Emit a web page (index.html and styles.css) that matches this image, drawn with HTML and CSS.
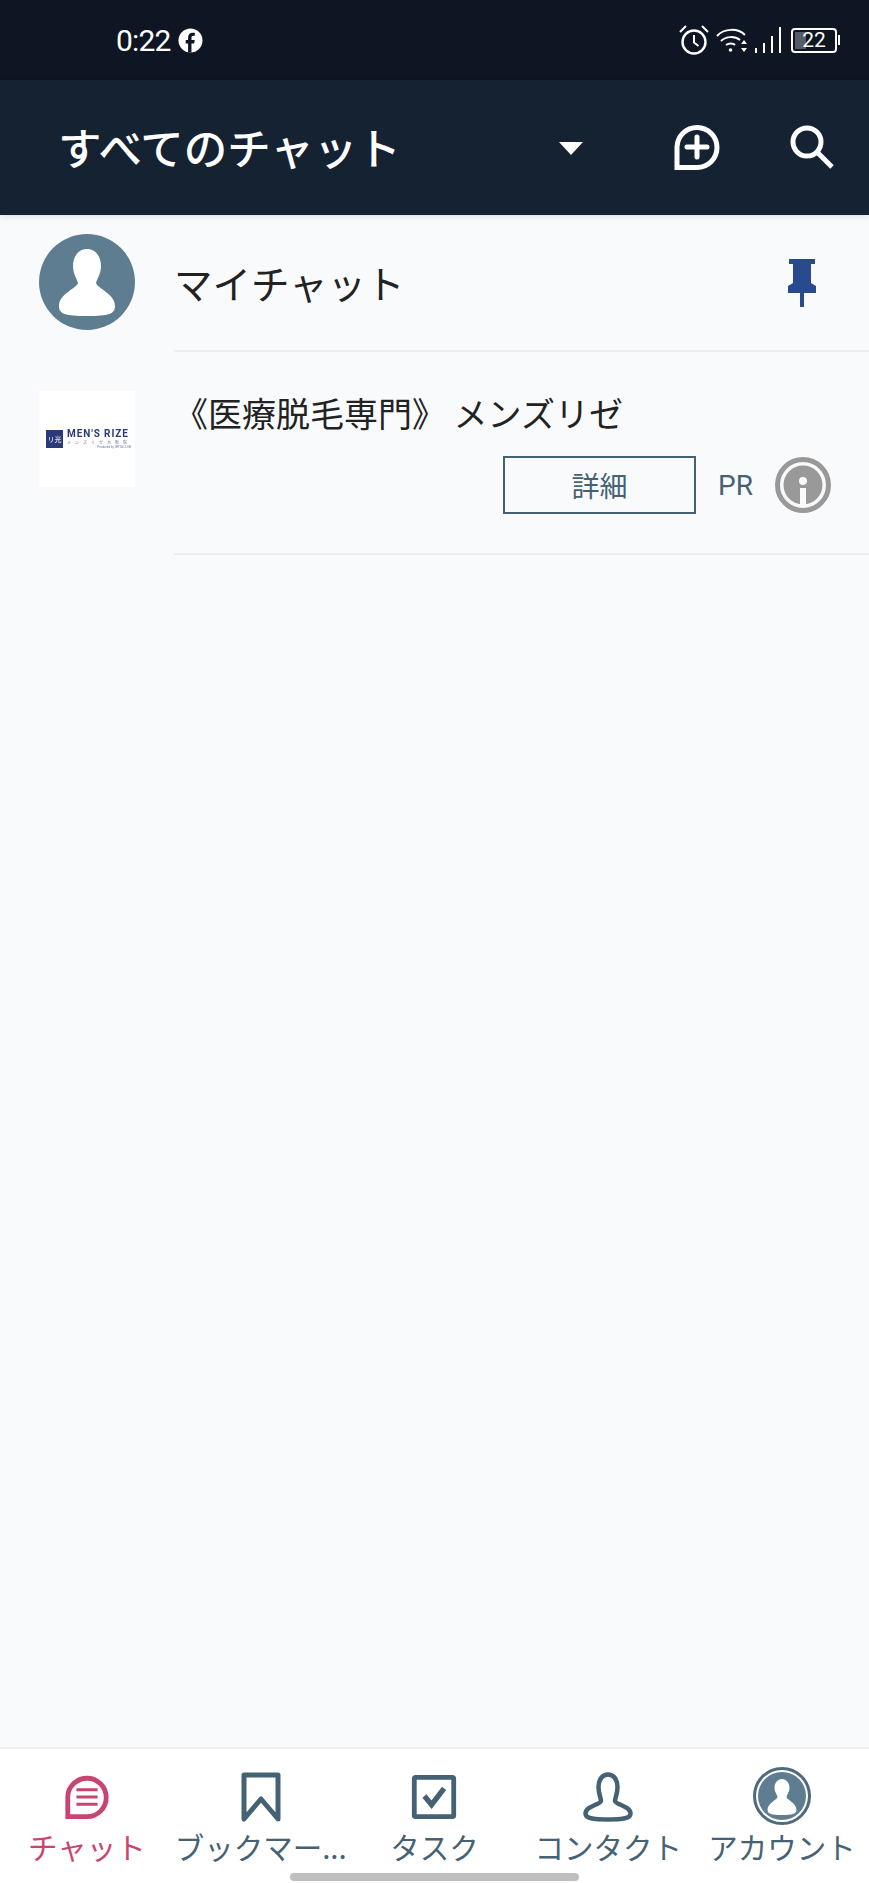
FILE: index.html
```html
<!DOCTYPE html>
<html lang="ja">
<head>
    <meta charset="utf-8" />
    <title>すべてのチャット</title>
    <meta name="viewport" content="width=device-width, initial-scale=1">
    <link rel="stylesheet" href="styles.css">
</head>
<body>
    <div class="status-bar">
        <div class="status-left">
            <span class="time">0:22</span>
            <svg class="fb-icon" viewBox="0 0 26 26">
                <circle cx="13" cy="13" r="12.500" fill="#fff"/>
                <path d="M10.500 25.500v-9.500H8v-3.500h2.500V10c0-3.200 1.900-5 4.800-5 1.200 0 2.200.1 2.200.1v3h-1.500c-1.500 0-2 .9-2 1.900v2.500h3.400l-.6 3.500h-2.800v9.500z" fill="#0d1622"/>
            </svg>
        </div>
        <div class="status-right">
            <svg class="alarm-icon" viewBox="0 0 32 32" fill="none" stroke="#fff">
                <circle cx="16" cy="18" r="11.500" stroke-width="2.400"/>
                <path d="M16 11v7.500l4.500 3.500" stroke-width="2"/>
                <path d="M2 8l6-6M30 8l-6-6" stroke-width="2"/>
            </svg>
            <svg class="wifi-icon" viewBox="0 0 34 26" fill="none" stroke="#fff" stroke-width="2">
                <path d="M1 9C8 1 22 1 29 8"/>
                <path d="M5 14c5-5 14-5 19-1"/>
                <path d="M10 18c3-2 7-2 9 0"/>
                <circle cx="14.500" cy="23" r="1.800" fill="#fff" stroke="none"/>
                <path d="M28 13l3 4h-6zM28 25l3-4h-6z" fill="#fff" stroke="none"/>
            </svg>
            <div class="signal">
                <span class="bar bar-1"></span>
                <span class="bar bar-2"></span>
                <span class="bar bar-3"></span>
                <span class="bar bar-4"></span>
            </div>
            <div class="battery">
                <span class="battery-level"></span>
                <span class="battery-text">22</span>
            </div>
            <span class="battery-cap"></span>
        </div>
    </div>

    <div class="app-header">
        <h1 class="header-title">すべてのチャット</h1>
        <span class="caret"></span>
        <svg class="add-icon" viewBox="0 0 46 46" fill="none" stroke="#fff" stroke-width="5">
            <path d="M3 43.500V23a20 20 0 1 1 20 20.500z"/>
            <path d="M23 13v20M13 23h20" stroke-linecap="round"/>
        </svg>
        <svg class="search-icon" viewBox="0 0 44 44" fill="none" stroke="#fff" stroke-width="5">
            <circle cx="17" cy="17" r="14"/>
            <path d="M27 27l15 15"/>
        </svg>
    </div>

    <div class="chat-list">
        <div class="chat-row my-chat">
            <svg class="avatar" viewBox="0 0 96 96">
                <circle cx="48" cy="48" r="48" fill="#5f7d90"/>
                <path d="M48 15C56 15 62 22 62 32C62 40 58 45 57 49C58 54 76 60 76 72C76 80 70 82 48 82C26 82 20 80 20 72C20 60 38 54 39 49C38 45 34 40 34 32C34 22 40 15 48 15Z" fill="#fff"/>
            </svg>
            <div class="chat-body">
                <p class="chat-name">マイチャット</p>
                <svg class="pin-icon" viewBox="0 0 30 50" fill="#2a4a8f">
                    <path d="M2 1h26v5h-4v19l5 3v7H1v-7l5-3V6H2z"/>
                    <rect x="13" y="35" width="4" height="14"/>
                </svg>
            </div>
        </div>

        <div class="chat-row ad-chat">
            <div class="ad-logo">
                <div class="logo-mark">リ光</div>
                <div class="logo-text">
                    <span class="logo-name">MEN'S RIZE</span>
                    <span class="logo-sub">メンズリゼ大阪院</span>
                    <span class="logo-small">Produced by URITA CLUB</span>
                </div>
            </div>
            <div class="chat-body">
                <p class="chat-name ad-name">《医療脱毛専門》 メンズリゼ</p>
                <div class="ad-actions">
                    <button class="detail-btn" type="button">詳細</button>
                    <span class="pr-label">PR</span>
                    <svg class="info-icon" viewBox="0 0 58 58">
                        <circle cx="29" cy="29" r="25.500" fill="none" stroke="#999" stroke-width="5"/>
                        <circle cx="29" cy="29" r="19.500" fill="#999"/>
                        <circle cx="29" cy="25" r="4" fill="#f9fafc"/>
                        <path d="M26 32h6v17h-6z" fill="#f9fafc"/>
                    </svg>
                </div>
            </div>
        </div>
    </div>

    <div class="bottom-nav">
        <div class="nav-item active">
            <svg class="nav-icon" viewBox="-3 -3 52 52" fill="none" stroke="#c9446f" stroke-width="5">
                <path d="M3 43.500V23a20 20 0 1 1 20 20.500z"/>
                <path d="M12 15.500h22M12 23h22M12 30.500h22" stroke-width="3"/>
            </svg>
            <span class="nav-label">チャット</span>
        </div>
        <div class="nav-item">
            <svg class="nav-icon" viewBox="-5 0 50 50" fill="none" stroke="#456274" stroke-width="5" stroke-linejoin="round" stroke-linecap="round">
                <path d="M3 3h34v44L20 27 3 47z"/>
            </svg>
            <span class="nav-label">ブックマー...</span>
        </div>
        <div class="nav-item">
            <svg class="nav-icon" viewBox="-3 -3 52 52" fill="none" stroke="#456274" stroke-width="5">
                <rect x="2.500" y="2.500" width="41" height="41" rx="1.500"/>
                <path d="M13 22l7.500 9 13-17" stroke-width="5.500"/>
            </svg>
            <span class="nav-label">タスク</span>
        </div>
        <div class="nav-item">
            <svg class="nav-icon" viewBox="0 0 50 50" fill="none" stroke="#456274" stroke-width="4.500">
                <path d="M25 2.500C31 2.500 34.500 8 34.500 15C34.500 22 32 26 32 29C33 33 47.500 34 47.500 41.500C47.500 46.500 40 47.500 25 47.500C10 47.500 2.500 46.500 2.500 41.500C2.500 34 17 33 18 29C18 26 15.500 22 15.500 15C15.500 8 19 2.500 25 2.500Z"/>
            </svg>
            <span class="nav-label">コンタクト</span>
        </div>
        <div class="nav-item">
            <svg class="nav-icon account-icon" viewBox="0 0 58 58">
                <circle cx="29" cy="29" r="27.500" fill="none" stroke="#4f6a7c" stroke-width="3"/>
                <circle cx="29" cy="29" r="24" fill="#5f7d90"/>
                <path d="M29 12C33 12 36.500 15.500 36.500 21C36.500 25 34 27.500 33.500 30C34 33 43.500 36 43.500 43C43.500 47 39 48 29 48C19 48 14.500 47 14.500 43C14.500 36 24 33 24.500 30C24 27.500 21.500 25 21.500 21C21.500 15.500 25 12 29 12Z" fill="#fff"/>
            </svg>
            <span class="nav-label">アカウント</span>
        </div>
        <div class="home-indicator"></div>
    </div>
</body>
</html>
```

FILE: styles.css
```css
* {
    padding: 0;
    margin: 0;
    box-sizing: border-box;
}

body {
    height: 100vh;
    display: flex;
    flex-direction: column;
    overflow: hidden;
    background-color: #f9fafc;
    font-family: "Noto Sans CJK JP", "Noto Sans", Roboto, sans-serif;
}

.status-bar {
    height: 80px;
    flex: 0 0 80px;
    background-color: #0d1622;
    color: white;
    display: flex;
    justify-content: space-between;
    align-items: center;
    padding: 0 29px 0 116px;
}

.status-left {
    display: flex;
    align-items: center;
    gap: 7px;
}

.time {
    font-family: Roboto, sans-serif;
    font-size: 30px;
    letter-spacing: -0.8px;
}

.fb-icon {
    width: 25px;
    height: 25px;
}

.status-right {
    display: flex;
    align-items: center;
}

.alarm-icon {
    width: 32px;
    height: 32px;
    margin-right: 6px;
}

.wifi-icon {
    width: 34px;
    height: 26px;
    margin-right: 5px;
}

.signal {
    display: flex;
    align-items: flex-end;
    gap: 6px;
    height: 26px;
    margin-right: 10px;
}

.bar {
    width: 2px;
    background-color: white;
}

.bar-1 { height: 5px; }
.bar-2 { height: 10px; }
.bar-3 { height: 17px; }
.bar-4 { height: 26px; }

.battery {
    width: 46px;
    height: 25px;
    border: 2px solid white;
    border-radius: 4px;
    display: flex;
    justify-content: center;
    align-items: center;
    position: relative;
}

.battery-level {
    position: absolute;
    left: 2px;
    top: 2px;
    bottom: 2px;
    width: 11px;
    background-color: #555d68;
}

.battery-text {
    font-family: Roboto, sans-serif;
    font-size: 21px;
    position: relative;
}

.battery-cap {
    width: 2px;
    height: 10px;
    background-color: white;
    margin-left: 1px;
}

.app-header {
    height: 135px;
    flex: 0 0 135px;
    background-color: #152232;
    color: white;
    display: flex;
    align-items: center;
    padding: 0 35px 2px 58px;
    box-shadow: 0 2px 6px rgba(0, 0, 0, 0.1);
}

.header-title {
    font-size: 43.5px;
    font-weight: 500;
    flex: 1;
}

.caret {
    width: 0;
    height: 0;
    border-left: 12.5px solid transparent;
    border-right: 12.5px solid transparent;
    border-top: 13px solid white;
    margin-top: 4px;
    margin-right: 91px;
}

.add-icon {
    width: 46px;
    height: 46px;
    margin-right: 70px;
}

.search-icon {
    width: 44px;
    height: 44px;
}

.chat-list {
    flex: 1;
}

.chat-row {
    display: flex;
    padding-left: 39px;
}

.avatar {
    width: 96px;
    height: 96px;
    margin-top: 19px;
    flex: 0 0 96px;
}

.chat-body {
    flex: 1;
    margin-left: 39px;
    border-bottom: 2px solid #ebedef;
}

.my-chat .chat-body {
    height: 137px;
    display: flex;
    justify-content: space-between;
    align-items: center;
    padding-right: 52px;
}

.chat-name {
    font-size: 38.5px;
    color: #222;
    margin-bottom: 2px;
}

.pin-icon {
    width: 30px;
    height: 50px;
}

.ad-chat .chat-body {
    height: 203px;
    padding: 38px 37px 0 0;
}

.ad-logo {
    width: 96px;
    height: 96px;
    margin-top: 39px;
    flex: 0 0 96px;
    background-color: white;
    display: flex;
    align-items: center;
    padding-left: 7px;
    gap: 4px;
    color: #2b3a77;
    overflow: hidden;
}

.logo-mark {
    width: 17px;
    height: 18px;
    background-color: #2b3a77;
    color: white;
    font-size: 7px;
    text-align: center;
    line-height: 18px;
    filter: blur(0.3px);
}

.logo-text {
    display: flex;
    flex-direction: column;
    white-space: nowrap;
    line-height: 1;
    filter: blur(0.3px);
}

.logo-name {
    font-family: Roboto, sans-serif;
    font-size: 10px;
    font-weight: 700;
    letter-spacing: 0.9px;
}

.logo-sub {
    font-size: 4px;
    letter-spacing: 4px;
    opacity: 0.7;
    margin-top: 1px;
}

.logo-small {
    font-family: Roboto, sans-serif;
    font-size: 3px;
    opacity: 0.7;
    margin-top: 2px;
    text-align: right;
}

.ad-name {
    font-size: 34px;
    line-height: 46px;
    margin-bottom: 0;
}

.ad-actions {
    display: flex;
    justify-content: flex-end;
    align-items: center;
    margin-top: 20px;
}

.detail-btn {
    width: 193px;
    height: 58px;
    background-color: transparent;
    border: 2px solid #456274;
    color: #456274;
    font-family: inherit;
    font-size: 28px;
}

.pr-label {
    font-family: Roboto, sans-serif;
    font-size: 28px;
    color: #456274;
    margin-left: 22px;
    margin-right: 21px;
}

.info-icon {
    width: 58px;
    height: 58px;
}

.bottom-nav {
    height: 136px;
    flex: 0 0 136px;
    background-color: white;
    border-top: 2px solid #eeeff1;
    display: grid;
    grid-template-columns: repeat(5, 1fr);
    position: relative;
}

.nav-item {
    display: flex;
    flex-direction: column;
    align-items: center;
    padding-top: 23px;
    color: #456274;
}

.nav-item.active {
    color: #c9446f;
}

.nav-icon {
    width: 50px;
    height: 50px;
}

.account-icon {
    width: 58px;
    height: 58px;
    margin-top: -5px;
    margin-bottom: -3px;
}

.nav-label {
    font-size: 29.5px;
    line-height: 40px;
    margin-top: 4px;
    white-space: nowrap;
}

.home-indicator {
    position: absolute;
    left: 290px;
    bottom: 2px;
    width: 289px;
    height: 8px;
    border-radius: 4px;
    background-color: #bfbfbf;
}
```
